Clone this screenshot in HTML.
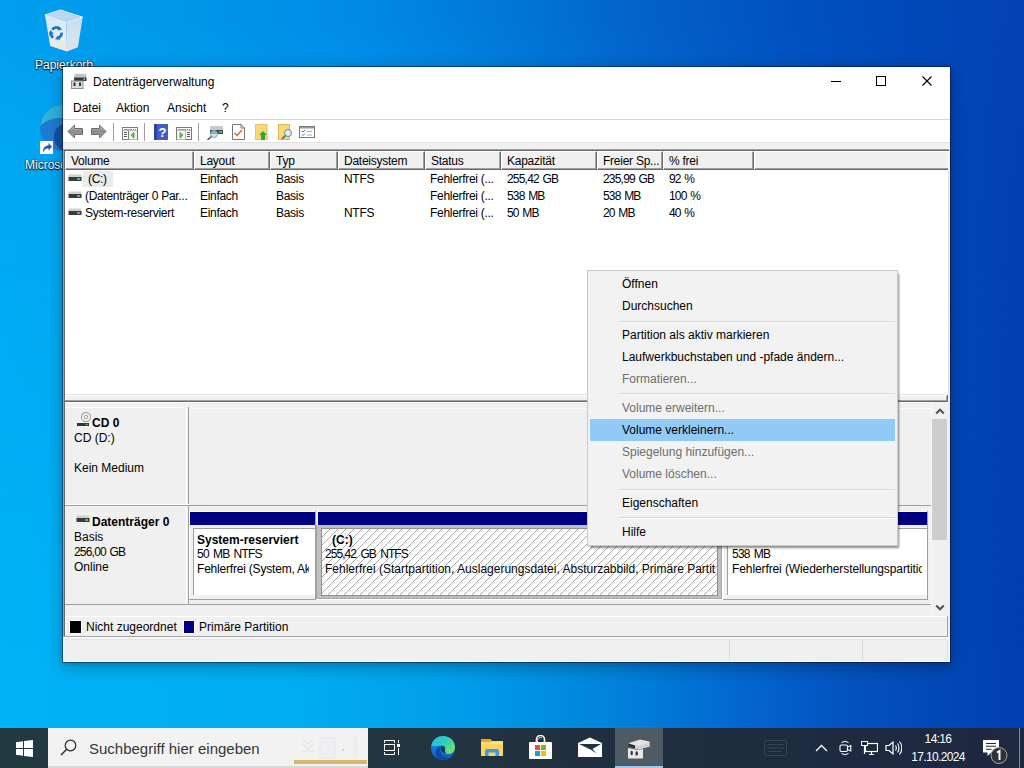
<!DOCTYPE html>
<html><head><meta charset="utf-8">
<style>
*{margin:0;padding:0;box-sizing:border-box}
html,body{width:1024px;height:768px;overflow:hidden}
body{position:relative;font-family:"Liberation Sans",sans-serif;font-size:12px;color:#000;
background:linear-gradient(90deg,#00b2f6 0%,#00b0f4 15%,#00adf0 29.3%,#009eea 44.3%,#0085dc 58.6%,#0365cf 73%,#0352bf 83%,#003fb0 100%)}
.a{position:absolute}
.t{position:absolute;white-space:nowrap;line-height:14px}
.dis{color:#6d6d6d}
.bd{font-weight:bold}
.dk{position:absolute;color:#fff;white-space:nowrap;font-size:12px;line-height:14px;text-shadow:0 0 2px #000,0 1px 1px #000}
</style></head><body>
<div class="a" style="left:0;top:0;width:1024px;height:768px;background:linear-gradient(90deg,#009fef 0%,#0096e8 19.5%,#008ae8 35%,#0078d8 48.8%,#0360c8 64%,#0050c0 78%,#0242b4 100%);-webkit-mask-image:linear-gradient(180deg,#000 0px,#000 20px,rgba(0,0,0,.45) 200px,rgba(0,0,0,0) 650px)"></div>

<svg class="a" style="left:40px;top:4px" width="48" height="52" viewBox="0 0 48 52">
<defs><linearGradient id="rbl" x1="0" y1="0" x2="0" y2="1"><stop offset="0" stop-color="#d8e6f2"/><stop offset=".65" stop-color="#e4edf4"/><stop offset="1" stop-color="#efe6e0"/></linearGradient>
<linearGradient id="rbr" x1="0" y1="0" x2="0" y2="1"><stop offset="0" stop-color="#cadcec"/><stop offset=".7" stop-color="#d6e4f0"/><stop offset="1" stop-color="#e6dcda"/></linearGradient></defs>
<path d="M5 11 L26.4 18.3 L27 47.4 L10.2 42 Z" fill="url(#rbl)"/>
<path d="M26.4 18.3 L42.7 13.2 L37.9 43.3 L27 47.4 Z" fill="url(#rbr)"/>
<path d="M5 11 L20.3 6 L42.7 13.2 L26.4 18.3 Z" fill="#a9cde9" stroke="#e6f2fb" stroke-width="1"/>
<path d="M8 11.3 L20.3 7.5 L39 13.3 L26.4 16.8 Z" fill="#bcd8ee"/>
<g fill="none" stroke="#1a74d2" stroke-width="2.8"><path d="M12.2 25.6 A5.4 5.4 0 0 1 19.6 24.6"/><path d="M21.6 28.6 A5.4 5.4 0 0 1 17.6 34"/><path d="M13.2 33.6 A5.4 5.4 0 0 1 10.9 28.4"/></g><g fill="#1a74d2"><path d="M18.2 22 L22.2 25.6 L17.6 26.6Z"/><path d="M20.2 35.8 L15 35.2 L17.8 31.4Z"/><path d="M9 31 L10.2 26 L13.6 29.4Z"/></g>
</svg>
<div class="dk" style="left:35px;top:58px">Papierkorb</div>
<svg class="a" style="left:38px;top:104px" width="26" height="50" viewBox="0 0 26 50">
<circle cx="25" cy="24" r="23" fill="#1f7bd2"/>
<path d="M2.2 22 A23 23 0 0 1 25 1 L25 14 C16 13.5 8 16 2.2 22Z" fill="#2fb2dc"/>
<path d="M25 20 C19 22 15 28 16 35 C17 41 21 45 25 47 Z" fill="#1450a8"/>
</svg>
<svg class="a" style="left:40px;top:141px" width="13" height="13" viewBox="0 0 13 13"><rect width="13" height="13" fill="#fff"/><path d="M3 11.5 C3 6.5 5 4.5 8.5 4.5 L8.5 2 L12 5.8 L8.5 9.5 L8.5 7.3 C6 7.3 4.5 8.5 3 11.5Z" fill="#2c56a6"/></svg>
<div class="dk" style="left:25px;top:158px">Microsoft Edge</div>
<div class="a" style="left:62px;top:66px;width:889px;height:597px;background:#f0f0f0;border:1px solid rgba(0,10,40,.5);background-clip:padding-box;box-shadow:0 4px 14px rgba(0,0,0,.3)"></div>
<div class="a" style="left:63px;top:67px;width:887px;height:52px;background:#fff"></div>
<svg class="a" style="left:71px;top:73px" width="16" height="16" viewBox="0 0 16 16">
<path d="M3.5 1.5 Q3.5 0.8 4.5 0.8 H14.5 Q15.5 0.8 15.5 1.5 V5 H3.5Z" fill="#c4c4c4"/>
<rect x="3" y="4.5" width="12.5" height="3.5" fill="#3a3a3a"/><rect x="12.5" y="5.5" width="1.5" height="1.2" fill="#cfe8cf"/>
<rect x="0.5" y="8" width="11.5" height="7.5" fill="#dcdcdc" stroke="#8e8e8e" stroke-width="1"/>
<rect x="2.5" y="9.5" width="2" height="3.5" fill="#303030"/><rect x="8" y="9.5" width="2" height="3.5" fill="#303030"/>
</svg>
<div class="t" style="left:93px;top:75px;">Datenträgerverwaltung</div>
<div class="t" style="left:73px;top:101px;">Datei</div>
<div class="t" style="left:116px;top:101px;">Aktion</div>
<div class="t" style="left:167px;top:101px;">Ansicht</div>
<div class="t" style="left:222px;top:101px;">?</div>
<div class="a" style="left:831px;top:81px;width:10px;height:1px;background:#000"></div>
<div class="a" style="left:876px;top:76px;width:10px;height:10px;border:1px solid #000"></div>
<svg class="a" style="left:921px;top:75px" width="12" height="12"><path d="M1.5 1.5 L10.5 10.5 M10.5 1.5 L1.5 10.5" stroke="#000" stroke-width="1.1"/></svg>
<div class="a" style="left:63px;top:119px;width:887px;height:1px;background:#d6d6d6"></div>
<div class="a" style="left:63px;top:120px;width:887px;height:22px;background:#fff"></div>
<div class="a" style="left:63px;top:142px;width:887px;height:1px;background:#e2e2e2"></div>
<svg class="a" style="left:67px;top:124px" width="18" height="16" viewBox="0 0 18 16"><defs><linearGradient id="ag" x1="0" y1="0" x2="0" y2="1"><stop offset="0" stop-color="#c4c4c4"/><stop offset=".5" stop-color="#8a8a8a"/><stop offset="1" stop-color="#a8a8a8"/></linearGradient></defs><path d="M1 7.5 L7.5 1 L7.5 4.5 L15.5 4.5 L15.5 10.5 L7.5 10.5 L7.5 14 Z" fill="url(#ag)" stroke="#6e6e6e" stroke-width="1" stroke-linejoin="round"/></svg>
<svg class="a" style="left:90px;top:124px" width="18" height="16" viewBox="0 0 18 16"><g transform="translate(17,0) scale(-1,1)"><path d="M1 7.5 L7.5 1 L7.5 4.5 L15.5 4.5 L15.5 10.5 L7.5 10.5 L7.5 14 Z" fill="url(#ag)" stroke="#6e6e6e" stroke-width="1" stroke-linejoin="round"/></g></svg>
<div class="a" style="left:113px;top:123px;width:1px;height:18px;background:#a0a0a0"></div>
<svg class="a" style="left:122px;top:127px" width="16" height="13" viewBox="0 0 16 13"><rect x="0.5" y="0.5" width="15" height="12" fill="#fff" stroke="#7a7a7a"/><rect x="2" y="2" width="8" height="1" fill="#9a9a9a"/><rect x="11" y="2" width="1" height="1" fill="#777"/><rect x="13" y="2" width="1" height="1" fill="#777"/><rect x="1" y="3" width="14" height="1" fill="#c0c0c0"/><rect x="6" y="4" width="1" height="8" fill="#7a7a7a"/><rect x="2" y="5" width="3" height="1" fill="#555"/><rect x="2" y="7" width="3" height="1" fill="#555"/><rect x="2" y="9" width="3" height="1" fill="#555"/><rect x="7" y="4" width="8" height="8.5" fill="#eef7ea"/><path d="M12 5.5 L9 8.2 L12 11Z" fill="#7cc26c" stroke="#3c9a3c" stroke-width=".8"/></svg>
<div class="a" style="left:144px;top:123px;width:1px;height:18px;background:#a0a0a0"></div>
<svg class="a" style="left:154px;top:124px" width="14" height="16" viewBox="0 0 14 16"><rect x="0" y="0" width="14" height="16" fill="#3f5fc6"/><rect x="0" y="0" width="3" height="16" fill="#2a43a0"/><text x="8.5" y="13" font-family="Liberation Sans" font-weight="bold" font-size="13" fill="#fff" text-anchor="middle">?</text></svg>
<svg class="a" style="left:176px;top:127px" width="16" height="13" viewBox="0 0 16 13"><rect x="0.5" y="0.5" width="15" height="12" fill="#fff" stroke="#7a7a7a"/><rect x="2" y="2" width="8" height="1" fill="#9a9a9a"/><rect x="11" y="2" width="1" height="1" fill="#777"/><rect x="13" y="2" width="1" height="1" fill="#777"/><rect x="1" y="3" width="14" height="1" fill="#c0c0c0"/><rect x="9" y="4" width="1" height="8" fill="#7a7a7a"/><rect x="11" y="5" width="3" height="1" fill="#555"/><rect x="11" y="7" width="3" height="1" fill="#555"/><rect x="11" y="9" width="3" height="1" fill="#555"/><rect x="1" y="4" width="8.5" height="8.5" fill="#eef7ea"/><path d="M4 5.5 L7 8.2 L4 11Z" fill="#7cc26c" stroke="#3c9a3c" stroke-width=".8"/></svg>
<div class="a" style="left:198px;top:123px;width:1px;height:18px;background:#a0a0a0"></div>
<svg class="a" style="left:207px;top:126px" width="16" height="14" viewBox="0 0 16 14"><rect x="3" y="0" width="13" height="4" rx="1" fill="#c8c8c8"/><rect x="3" y="4" width="13" height="4" fill="#3a4a4a"/><rect x="12" y="5" width="3" height="2" fill="#3fd03f"/><circle cx="7" cy="8" r="3.5" fill="#b8d8e8" fill-opacity=".7" stroke="#8aa" stroke-width="1"/><path d="M4.5 10.5 L0.5 14" stroke="#555" stroke-width="1.5"/></svg>
<svg class="a" style="left:232px;top:124px" width="13" height="16" viewBox="0 0 13 16"><path d="M0.5 0.5 L9 0.5 L12.5 4 L12.5 15.5 L0.5 15.5Z" fill="#fff" stroke="#777"/><path d="M9 0.5 L9 4 L12.5 4" fill="none" stroke="#777"/><path d="M2.5 9 L5 11.5 L10 6" fill="none" stroke="#e06030" stroke-width="1.5"/></svg>
<svg class="a" style="left:255px;top:124px" width="14" height="16" viewBox="0 0 14 16"><rect x="0" y="0" width="12" height="16" fill="#f8d878"/><rect x="0" y="0" width="12" height="16" fill="none" stroke="#e0b850"/><path d="M8 7 L12 11 L10 11 L10 16 L6 16 L6 11 L4 11Z" fill="#2ea82e"/></svg>
<svg class="a" style="left:278px;top:124px" width="15" height="16" viewBox="0 0 15 16"><rect x="0" y="0" width="12" height="16" fill="#f8d878"/><rect x="0.5" y="0.5" width="11" height="15" fill="none" stroke="#e0b850"/><circle cx="10" cy="9" r="3.5" fill="#d8eef8" stroke="#6a8aa0"/><path d="M7.5 11.5 L4 15" stroke="#555" stroke-width="1.5"/></svg>
<svg class="a" style="left:299px;top:126px" width="16" height="12" viewBox="0 0 16 12"><rect x="0.5" y="0.5" width="15" height="11" fill="#fff" stroke="#777"/><rect x="1" y="1" width="14" height="1.5" fill="#999"/><path d="M3 5 L4 6 L6 4 M3 8.5 L4 9.5 L6 7.5" fill="none" stroke="#3a7ad0" stroke-width="1"/><rect x="8" y="5" width="5" height="1" fill="#aaa"/><rect x="8" y="8.5" width="5" height="1" fill="#aaa"/></svg>
<div class="a" style="left:63px;top:149px;width:886px;height:246px;background:#fff;border-top:1px solid #a0a0a0;border-left:1px solid #a0a0a0"></div>
<div class="a" style="left:64px;top:150px;width:885px;height:244px;border-top:1px solid #696969;border-left:1px solid #696969"></div>
<div class="a" style="left:65px;top:394px;width:884px;height:1px;background:#e3e3e3"></div>
<div class="a" style="left:948px;top:170px;width:1px;height:225px;background:#e3e3e3"></div>
<div class="a" style="left:65px;top:151px;width:129px;height:19px;background:#f0f0f0;border-top:1px solid #fff;border-left:1px solid #fff;border-right:1px solid #696969;border-bottom:1px solid #696969;box-shadow:inset -1px -1px 0 #a0a0a0"></div>
<div class="t" style="left:71px;top:154px;letter-spacing:-0.25px">Volume</div>
<div class="a" style="left:194px;top:151px;width:76px;height:19px;background:#f0f0f0;border-top:1px solid #fff;border-left:1px solid #fff;border-right:1px solid #696969;border-bottom:1px solid #696969;box-shadow:inset -1px -1px 0 #a0a0a0"></div>
<div class="t" style="left:200px;top:154px;letter-spacing:-0.25px">Layout</div>
<div class="a" style="left:270px;top:151px;width:68px;height:19px;background:#f0f0f0;border-top:1px solid #fff;border-left:1px solid #fff;border-right:1px solid #696969;border-bottom:1px solid #696969;box-shadow:inset -1px -1px 0 #a0a0a0"></div>
<div class="t" style="left:276px;top:154px;letter-spacing:-0.25px">Typ</div>
<div class="a" style="left:338px;top:151px;width:87px;height:19px;background:#f0f0f0;border-top:1px solid #fff;border-left:1px solid #fff;border-right:1px solid #696969;border-bottom:1px solid #696969;box-shadow:inset -1px -1px 0 #a0a0a0"></div>
<div class="t" style="left:344px;top:154px;letter-spacing:-0.25px">Dateisystem</div>
<div class="a" style="left:425px;top:151px;width:76px;height:19px;background:#f0f0f0;border-top:1px solid #fff;border-left:1px solid #fff;border-right:1px solid #696969;border-bottom:1px solid #696969;box-shadow:inset -1px -1px 0 #a0a0a0"></div>
<div class="t" style="left:431px;top:154px;letter-spacing:-0.25px">Status</div>
<div class="a" style="left:501px;top:151px;width:96px;height:19px;background:#f0f0f0;border-top:1px solid #fff;border-left:1px solid #fff;border-right:1px solid #696969;border-bottom:1px solid #696969;box-shadow:inset -1px -1px 0 #a0a0a0"></div>
<div class="t" style="left:507px;top:154px;letter-spacing:-0.25px">Kapazität</div>
<div class="a" style="left:597px;top:151px;width:66px;height:19px;background:#f0f0f0;border-top:1px solid #fff;border-left:1px solid #fff;border-right:1px solid #696969;border-bottom:1px solid #696969;box-shadow:inset -1px -1px 0 #a0a0a0"></div>
<div class="t" style="left:603px;top:154px;letter-spacing:-0.25px">Freier Sp...</div>
<div class="a" style="left:663px;top:151px;width:91px;height:19px;background:#f0f0f0;border-top:1px solid #fff;border-left:1px solid #fff;border-right:1px solid #696969;border-bottom:1px solid #696969;box-shadow:inset -1px -1px 0 #a0a0a0"></div>
<div class="t" style="left:669px;top:154px;letter-spacing:-0.25px">% frei</div>
<div class="a" style="left:754px;top:151px;width:194px;height:19px;background:#f0f0f0;border-top:1px solid #fff;border-left:1px solid #fff;border-bottom:1px solid #696969;box-shadow:inset 0 -1px 0 #a0a0a0"></div>
<div class="a" style="left:83px;top:171px;width:30px;height:16px;background:#ebebeb"></div>
<svg class="a" style="left:68px;top:174px" width="14" height="8" viewBox="0 0 14 8"><rect x="0.5" y="0.5" width="13" height="3" fill="#d0d0d0"/><rect x="0.5" y="3" width="13" height="4" fill="#3a3a3a"/><rect x="9" y="4" width="3" height="2" fill="#49c549"/></svg>
<div class="t" style="left:88px;top:172px;letter-spacing:-0.3px">(C:)</div>
<div class="t" style="left:200px;top:172px;letter-spacing:-0.3px">Einfach</div>
<div class="t" style="left:276px;top:172px;letter-spacing:-0.3px">Basis</div>
<div class="t" style="left:344px;top:172px;letter-spacing:-0.3px">NTFS</div>
<div class="t" style="left:430px;top:172px;letter-spacing:-0.3px">Fehlerfrei (...</div>
<div class="t" style="left:507px;top:172px;letter-spacing:-0.8px;word-spacing:1px">255,42 GB</div>
<div class="t" style="left:603px;top:172px;letter-spacing:-0.8px;word-spacing:1px">235,99 GB</div>
<div class="t" style="left:669px;top:172px;letter-spacing:-0.8px;word-spacing:1px">92 %</div>
<svg class="a" style="left:68px;top:191px" width="14" height="8" viewBox="0 0 14 8"><rect x="0.5" y="0.5" width="13" height="3" fill="#d0d0d0"/><rect x="0.5" y="3" width="13" height="4" fill="#3a3a3a"/><rect x="9" y="4" width="3" height="2" fill="#49c549"/></svg>
<div class="t" style="left:85px;top:189px;letter-spacing:-0.3px">(Datenträger 0 Par...</div>
<div class="t" style="left:200px;top:189px;letter-spacing:-0.3px">Einfach</div>
<div class="t" style="left:276px;top:189px;letter-spacing:-0.3px">Basis</div>
<div class="t" style="left:344px;top:189px;letter-spacing:-0.3px"></div>
<div class="t" style="left:430px;top:189px;letter-spacing:-0.3px">Fehlerfrei (...</div>
<div class="t" style="left:507px;top:189px;letter-spacing:-0.8px;word-spacing:1px">538 MB</div>
<div class="t" style="left:603px;top:189px;letter-spacing:-0.8px;word-spacing:1px">538 MB</div>
<div class="t" style="left:669px;top:189px;letter-spacing:-0.8px;word-spacing:1px">100 %</div>
<svg class="a" style="left:68px;top:208px" width="14" height="8" viewBox="0 0 14 8"><rect x="0.5" y="0.5" width="13" height="3" fill="#d0d0d0"/><rect x="0.5" y="3" width="13" height="4" fill="#3a3a3a"/><rect x="9" y="4" width="3" height="2" fill="#49c549"/></svg>
<div class="t" style="left:85px;top:206px;letter-spacing:-0.3px">System-reserviert</div>
<div class="t" style="left:200px;top:206px;letter-spacing:-0.3px">Einfach</div>
<div class="t" style="left:276px;top:206px;letter-spacing:-0.3px">Basis</div>
<div class="t" style="left:344px;top:206px;letter-spacing:-0.3px">NTFS</div>
<div class="t" style="left:430px;top:206px;letter-spacing:-0.3px">Fehlerfrei (...</div>
<div class="t" style="left:507px;top:206px;letter-spacing:-0.8px;word-spacing:1px">50 MB</div>
<div class="t" style="left:603px;top:206px;letter-spacing:-0.8px;word-spacing:1px">20 MB</div>
<div class="t" style="left:669px;top:206px;letter-spacing:-0.8px;word-spacing:1px">40 %</div>
<div class="a" style="left:65px;top:395px;width:883px;height:5px;background:#f0f0f0"></div>
<div class="a" style="left:65px;top:395px;width:883px;height:1px;background:#fff"></div>
<div class="a" style="left:65px;top:390px;width:1px;height:10px;background:#fff"></div>
<div class="a" style="left:64px;top:400px;width:883px;height:1px;background:#a0a0a0"></div>
<div class="a" style="left:64px;top:401px;width:884px;height:1px;background:#696969"></div>
<div class="a" style="left:65px;top:402px;width:866px;height:1px;background:#fbfbfb"></div>
<div class="a" style="left:946px;top:396px;width:1px;height:5px;background:#a0a0a0"></div>
<div class="a" style="left:947px;top:395px;width:1px;height:7px;background:#696969"></div>
<div class="a" style="left:63px;top:400px;width:1px;height:205px;background:#a0a0a0"></div>
<div class="a" style="left:64px;top:401px;width:1px;height:204px;background:#696969"></div>
<div class="a" style="left:931px;top:402px;width:17px;height:214px;background:#f0f0f0;border-left:1px solid #f8f8f8"></div>
<div class="a" style="left:932px;top:419px;width:15px;height:121px;background:#cdcdcd"></div>
<svg class="a" style="left:935px;top:407px" width="10" height="8" viewBox="0 0 10 8"><path d="M1.2 6.5 L5 2.7 L8.8 6.5" fill="none" stroke="#505050" stroke-width="2"/></svg>
<svg class="a" style="left:935px;top:604px" width="10" height="8" viewBox="0 0 10 8"><path d="M1.2 1.5 L5 5.3 L8.8 1.5" fill="none" stroke="#505050" stroke-width="2"/></svg>
<div class="a" style="left:65px;top:407px;width:118px;height:1px;background:#fff"></div>
<div class="a" style="left:190px;top:408px;width:741px;height:1px;background:#fafafa"></div>
<div class="a" style="left:186px;top:408px;width:1px;height:97px;background:#fff"></div>
<div class="a" style="left:188px;top:407px;width:1px;height:98px;background:#a0a0a0"></div>
<div class="a" style="left:65px;top:504px;width:124px;height:1px;background:#fff"></div>
<div class="a" style="left:65px;top:505px;width:866px;height:1px;background:#a0a0a0"></div>
<svg class="a" style="left:76px;top:410px" width="15" height="17" viewBox="0 0 15 17"><circle cx="10" cy="7" r="4.6" fill="#ececec" stroke="#a8a8a8" stroke-width="1.1"/><circle cx="10" cy="7" r="1.6" fill="#fff" stroke="#a0a0a0" stroke-width="1"/><rect x="1" y="13" width="12" height="3" fill="#333"/><rect x="9.5" y="13.8" width="2.2" height="1.4" fill="#3ecf3e"/></svg>
<div class="t" style="left:92px;top:416px;"><span class="bd">CD 0</span></div>
<div class="t" style="left:74px;top:431px;">CD (D:)</div>
<div class="t" style="left:74px;top:461px;">Kein Medium</div>
<div class="a" style="left:186px;top:506px;width:1px;height:98px;background:#fff"></div>
<div class="a" style="left:188px;top:506px;width:1px;height:98px;background:#a0a0a0"></div>
<div class="a" style="left:65px;top:604px;width:866px;height:1px;background:#a0a0a0"></div>
<svg class="a" style="left:76px;top:515px" width="14" height="8" viewBox="0 0 14 8"><rect x="0.5" y="0.5" width="13" height="3" fill="#d0d0d0"/><rect x="0.5" y="3" width="13" height="4" fill="#3a3a3a"/><rect x="9" y="4" width="3" height="2" fill="#49c549"/></svg>
<div class="t" style="left:92px;top:515px;"><span class="bd">Datenträger 0</span></div>
<div class="t" style="left:74px;top:530px;">Basis</div>
<div class="t" style="left:74px;top:545px;letter-spacing:-0.8px;word-spacing:1px">256,00 GB</div>
<div class="t" style="left:74px;top:560px;">Online</div>
<div class="a" style="left:189px;top:511px;width:126px;height:88px;background:#fff"></div>
<div class="a" style="left:190px;top:512px;width:125px;height:13px;background:#000080"></div>
<div class="a" style="left:190px;top:525px;width:125px;height:74px;background:#f0f0f0"></div>
<div class="a" style="left:315px;top:511px;width:1px;height:89px;background:#a0a0a0"></div>
<div class="a" style="left:189px;top:599px;width:127px;height:1px;background:#a0a0a0"></div>
<div class="a" style="left:193px;top:528px;width:122px;height:67px;background:#fff;border-left:1px solid #a0a0a0;border-top:1px solid #a0a0a0"></div>
<div class="a" style="left:316px;top:511px;width:407px;height:1px;background:#fff"></div>
<div class="a" style="left:318px;top:512px;width:404px;height:13px;background:#000080"></div>
<div class="a" style="left:316px;top:525px;width:406px;height:74px;background:#c0c0c0"></div>
<div class="a" style="left:316px;top:525px;width:1px;height:74px;background:#a0a0a0"></div>
<div class="a" style="left:721px;top:525px;width:1px;height:74px;background:#a8a8a8"></div>
<div class="a" style="left:316px;top:598px;width:406px;height:1px;background:#a8a8a8"></div>
<div class="a" style="left:722px;top:511px;width:1px;height:89px;background:#fff"></div>
<div class="a" style="left:316px;top:599px;width:407px;height:1px;background:#fff"></div>
<div class="a" style="left:321px;top:528px;width:397px;height:68px;border:1px solid #909090"></div>
<svg class="a" style="left:322px;top:529px" width="395" height="66"><defs><pattern id="hp" patternUnits="userSpaceOnUse" width="8" height="8"><path d="M-1 9 L9 -1" stroke="#a8a8a8" stroke-width="1"/></pattern></defs><rect width="100%" height="100%" fill="#fff"/><rect width="100%" height="100%" fill="url(#hp)"/></svg>
<div class="a" style="left:723px;top:511px;width:204px;height:88px;background:#fff"></div>
<div class="a" style="left:724px;top:512px;width:203px;height:13px;background:#000080"></div>
<div class="a" style="left:724px;top:525px;width:203px;height:74px;background:#f0f0f0"></div>
<div class="a" style="left:927px;top:511px;width:1px;height:89px;background:#a0a0a0"></div>
<div class="a" style="left:723px;top:599px;width:205px;height:1px;background:#a0a0a0"></div>
<div class="a" style="left:727px;top:528px;width:200px;height:67px;background:#fff;border-left:1px solid #a0a0a0;border-top:1px solid #a0a0a0"></div>
<div class="t" style="left:197px;top:533px;"><span class="bd">System-reserviert</span></div>
<div class="t" style="left:197px;top:547px;letter-spacing:-0.75px;word-spacing:1.5px">50 MB NTFS</div>
<div class="t" style="left:197px;top:562px;width:112px;overflow:hidden;letter-spacing:-0.2px">Fehlerfrei (System, Aktiv, Primäre Partition)</div>
<div class="t" style="left:332px;top:533px;text-shadow:0 0 1px #fff,0 0 1px #fff"><span class="bd">(C:)</span></div>
<div class="t" style="left:325px;top:547px;letter-spacing:-0.95px;word-spacing:2px;text-shadow:0 0 1px #fff,0 0 1px #fff">255,42 GB NTFS</div>
<div class="t" style="left:325px;top:562px;width:391px;overflow:hidden;text-shadow:0 0 1px #fff,0 0 1px #fff">Fehlerfrei (Startpartition, Auslagerungsdatei, Absturzabbild, Primäre Partition)</div>
<div class="t" style="left:732px;top:547px;letter-spacing:-0.75px;word-spacing:1.5px">538 MB</div>
<div class="t" style="left:732px;top:562px;width:190px;overflow:hidden;letter-spacing:-0.1px">Fehlerfrei (Wiederherstellungspartition)</div>
<div class="a" style="left:65px;top:616px;width:882px;height:1px;background:#fff"></div>
<div class="a" style="left:65px;top:616px;width:1px;height:20px;background:#fff"></div>
<div class="a" style="left:947px;top:616px;width:1px;height:21px;background:#a0a0a0"></div>
<div class="a" style="left:64px;top:636px;width:884px;height:1px;background:#a0a0a0"></div>
<div class="a" style="left:63px;top:149px;width:1px;height:488px;background:#a0a0a0"></div>
<div class="a" style="left:64px;top:150px;width:1px;height:486px;background:#696969"></div>
<div class="a" style="left:69px;top:620px;width:13px;height:14px;background:#fff"></div>
<div class="a" style="left:70px;top:621px;width:11px;height:12px;background:#000"></div>
<div class="t" style="left:86px;top:620px;">Nicht zugeordnet</div>
<div class="a" style="left:183px;top:620px;width:12px;height:14px;background:#fff"></div>
<div class="a" style="left:184px;top:621px;width:10px;height:12px;background:#000080"></div>
<div class="t" style="left:199px;top:620px;">Primäre Partition</div>
<div class="a" style="left:63px;top:637px;width:887px;height:25px;background:#f0f0f0"></div>
<div class="a" style="left:63px;top:637px;width:887px;height:1px;background:#fff"></div>
<div class="a" style="left:63px;top:637px;width:1px;height:25px;background:#fff"></div>
<div class="a" style="left:63px;top:661px;width:887px;height:1px;background:#fff"></div>
<div class="a" style="left:949px;top:637px;width:1px;height:25px;background:#fff"></div>
<div class="a" style="left:65px;top:639px;width:882px;height:1px;background:#e6e6e6"></div>
<div class="a" style="left:729px;top:640px;width:1px;height:20px;background:#d9d9d9"></div>
<div class="a" style="left:862px;top:640px;width:1px;height:20px;background:#d9d9d9"></div>
<div class="a" style="left:947px;top:640px;width:1px;height:20px;background:#dde4dd"></div>
<div class="a" style="left:587px;top:270px;width:311px;height:276px;background:#f2f2f2;border:1px solid #cacaca;box-shadow:2px 3px 2px -1px rgba(0,0,0,.45)"></div>
<div class="a" style="left:590px;top:419px;width:305px;height:22px;background:#91c9f7"></div>
<div class="t" style="left:622px;top:277px;">Öffnen</div>
<div class="t" style="left:622px;top:299px;">Durchsuchen</div>
<div class="t" style="left:622px;top:328px;">Partition als aktiv markieren</div>
<div class="t" style="left:622px;top:350px;">Laufwerkbuchstaben und -pfade ändern...</div>
<div class="t dis" style="left:622px;top:372px;">Formatieren...</div>
<div class="t dis" style="left:622px;top:401px;">Volume erweitern...</div>
<div class="t" style="left:622px;top:423px;">Volume verkleinern...</div>
<div class="t dis" style="left:622px;top:445px;">Spiegelung hinzufügen...</div>
<div class="t dis" style="left:622px;top:467px;">Volume löschen...</div>
<div class="t" style="left:622px;top:496px;">Eigenschaften</div>
<div class="t" style="left:622px;top:525px;">Hilfe</div>
<div class="a" style="left:618px;top:321px;width:277px;height:1px;background:#d7d7d7"></div>
<div class="a" style="left:618px;top:322px;width:277px;height:1px;background:#fafafa"></div>
<div class="a" style="left:618px;top:393px;width:277px;height:1px;background:#d7d7d7"></div>
<div class="a" style="left:618px;top:394px;width:277px;height:1px;background:#fafafa"></div>
<div class="a" style="left:618px;top:489px;width:277px;height:1px;background:#d7d7d7"></div>
<div class="a" style="left:618px;top:490px;width:277px;height:1px;background:#fafafa"></div>
<div class="a" style="left:618px;top:517px;width:277px;height:1px;background:#d7d7d7"></div>
<div class="a" style="left:618px;top:518px;width:277px;height:1px;background:#fafafa"></div>
<div class="a" style="left:0;top:728px;width:1024px;height:40px;background:linear-gradient(90deg,#223a42 0%,#223641 40%,#20303f 55%,#1d2a40 85%,#1e2840 100%)"></div>
<svg class="a" style="left:16px;top:740px" width="17" height="17" viewBox="0 0 17 17"><path d="M0 2.3 L7 1.3 L7 8 L0 8Z M8 1.1 L17 0 L17 8 L8 8Z M0 9 L7 9 L7 15.7 L0 14.7Z M8 9 L17 9 L17 17 L8 15.9Z" fill="#fff"/></svg>
<div class="a" style="left:48px;top:728px;width:320px;height:40px;background:#f2f2f2"></div>
<div class="a" style="left:48px;top:766px;width:320px;height:2px;background:#d8d8d8"></div>
<svg class="a" style="left:60px;top:739px" width="17" height="17" viewBox="0 0 17 17"><circle cx="10.5" cy="6.5" r="5.3" fill="none" stroke="#2a2a2a" stroke-width="1.2"/><path d="M6.7 10.3 L1 16" stroke="#2a2a2a" stroke-width="1.4"/></svg>
<div class="a" style="left:89px;top:740px;font-size:15px;line-height:18px;color:#363636;white-space:nowrap">Suchbegriff hier eingeben</div>
<div class="a" style="left:294px;top:760px;width:73px;height:4px;background:#dcb56c"></div>
<svg class="a" style="left:296px;top:735px" width="70" height="25" viewBox="0 0 70 25"><path d="M7 4 L12 9 L17 4 M6 8 L12 14 L18 8 M5 16 H19" fill="none" stroke="#e6e6e6" stroke-width="1.3"/><rect x="24" y="3" width="15" height="20" rx="2" fill="#eef0f3" stroke="#e6e6e6"/><circle cx="47" cy="15" r=".8" fill="#aaa"/><rect x="57" y="2" width="5" height="21" fill="#ededed"/></svg>
<svg class="a" style="left:383px;top:739px" width="18" height="17" viewBox="0 0 18 17"><path d="M1.5 4 V1.5 H11.5 V4 M1.5 13 V15.5 H11.5 V13" fill="none" stroke="#fff" stroke-width="1"/><rect x="1.5" y="5.5" width="10" height="6" fill="none" stroke="#fff" stroke-width="1"/><rect x="15" y="1" width="1" height="3" fill="#fff"/><rect x="14" y="5" width="3" height="3" fill="#fff"/><rect x="15" y="9" width="1" height="7" fill="#fff"/></svg>
<svg class="a" style="left:430px;top:735px" width="26" height="26" viewBox="0 0 26 26"><defs><linearGradient id="eg" x1="0" y1="0" x2="1" y2=".6"><stop offset="0" stop-color="#2fb8e8"/><stop offset=".55" stop-color="#2ccfc0"/><stop offset="1" stop-color="#6de06a"/></linearGradient><linearGradient id="eb" x1="0" y1="0" x2="0" y2="1"><stop offset="0" stop-color="#1a8ae6"/><stop offset="1" stop-color="#0f5fc0"/></linearGradient></defs><circle cx="13" cy="13" r="12" fill="url(#eb)"/><path d="M1.3 10.5 C3 4 8 1 13 1 C20 1 25 6 25 12 C25 16.5 22 19 18.5 19 C15.5 19 14.3 17 15 15 C15.8 12.5 14.5 10.5 12 10.5 C8 10.5 5 12 1.3 10.5Z" fill="url(#eg)"/><path d="M12 11 C10 12 9.5 15 11 18 C12.5 21 16 23.5 20 23 C17 25 12 25.5 8.5 23.5 C5 21 4.5 15 8 12.5 C9 11.8 10.5 11.2 12 11Z" fill="#0c4aa6"/><path d="M11.5 11 C13.5 11 15.3 12 15 14.5 C14.7 16 15 17.5 16 18.5 C13 18 11 16 10.8 13.5Z" fill="#1d3550"/></svg>
<svg class="a" style="left:480px;top:738px" width="24" height="19" viewBox="0 0 24 19"><path d="M1 1 H10 L12 3 H23 V18 H1Z" fill="#ffd45e"/><rect x="1" y="1" width="10" height="3" fill="#e8a915"/><rect x="1" y="4" width="22" height="2" fill="#ffe17a"/><path d="M5 18 V13 Q5 11 7 11 H17 Q19 11 19 13 V18 H15.5 V14.5 H8.5 V18Z" fill="#3b9be0"/></svg>
<svg class="a" style="left:528px;top:735px" width="25" height="25" viewBox="0 0 25 25"><path d="M8.5 7 V4.5 A4 4 0 0 1 16.5 4.5 V7" fill="none" stroke="#fff" stroke-width="1.6"/><path d="M9.5 7 V5.5 A3 3 0 0 1 14 3" fill="none" stroke="#fff" stroke-width="0.8"/><rect x="1" y="7" width="23" height="17" rx="1" fill="#fff"/><rect x="7" y="10" width="5" height="5" fill="#f25022"/><rect x="13" y="10" width="5" height="5" fill="#7fba00"/><rect x="7" y="16" width="5" height="5" fill="#00a4ef"/><rect x="13" y="16" width="5" height="5" fill="#ffb900"/></svg>
<svg class="a" style="left:577px;top:737px" width="26" height="21" viewBox="0 0 26 21"><path d="M1 6 L13 0.5 L25 6 V20 H1Z" fill="#fff"/><path d="M2 7 H24 L15.5 12 L19.5 16.5 L13.5 12.5Z" fill="#1d3446"/></svg>
<div class="a" style="left:615px;top:728px;width:48px;height:40px;background:#4e5a64"></div>
<div class="a" style="left:615px;top:766px;width:48px;height:2px;background:#9fc4e6"></div>
<svg class="a" style="left:626px;top:738px" width="26" height="22" viewBox="0 0 26 22"><path d="M3 5 L14 1.5 L23.5 3.5 L23.5 8.5 L12.5 11.5 L3 8.5Z" fill="#e4e4e4"/><path d="M3 5 L12.5 8 L23.5 4.5 L23.5 8.5 L12.5 11.5 L3 8.5Z" fill="#cfcfcf"/><path d="M2.5 5.5 L9 7.5 L9 10.5 L2.5 8.5Z" fill="#2a2a2a"/><path d="M2 10 L12 12 L17 11 L17 20.5 L2 20.5Z" fill="#e6e6e6"/><ellipse cx="5.7" cy="15" rx="1.2" ry="2.3" fill="#333"/><ellipse cx="10.7" cy="15.5" rx="1.2" ry="2.3" fill="#333"/></svg>
<svg class="a" style="left:764px;top:740px" width="25" height="16" viewBox="0 0 25 16"><rect x="0.5" y="0.5" width="22" height="15" rx="1" fill="none" stroke="#354555"/><path d="M3 4.5 H20 M3 8 H20 M5 11.5 H18" stroke="#354555" stroke-width="1"/></svg>
<svg class="a" style="left:815px;top:744px" width="13" height="8" viewBox="0 0 13 8"><path d="M1 7 L6.5 1.5 L12 7" fill="none" stroke="#fff" stroke-width="1.3"/></svg>
<svg class="a" style="left:839px;top:740px" width="13" height="16" viewBox="0 0 13 16"><path d="M2.5 2.5 Q6 0 9.5 2.5 M2.5 13.5 Q6 16 9.5 13.5" fill="none" stroke="#fff" stroke-width="1"/><rect x="1" y="5" width="7.5" height="6.5" rx="1.5" fill="none" stroke="#fff" stroke-width="1.1"/><path d="M8.5 7 L11.8 5.5 V11 L8.5 9.5" fill="none" stroke="#fff" stroke-width="1.1"/></svg>
<svg class="a" style="left:861px;top:741px" width="17" height="14" viewBox="0 0 17 14"><rect x="4.5" y="2.5" width="12" height="8" fill="none" stroke="#fff" stroke-width="1.2"/><rect x="0.5" y="0.5" width="6" height="4" fill="#1d2a3a" stroke="#fff" stroke-width="1"/><path d="M3.5 4.5 V13 M8 13.5 H13 M10.5 10.5 V13.5" stroke="#fff" stroke-width="1.2"/></svg>
<svg class="a" style="left:885px;top:740px" width="17" height="16" viewBox="0 0 17 16"><path d="M1 5.5 H4 L8 2 V14 L4 10.5 H1Z" fill="none" stroke="#fff" stroke-width="1.2"/><path d="M10.5 5.5 C11.5 7 11.5 9 10.5 10.5 M12.5 3.5 C14.5 6 14.5 10 12.5 12.5 M14.5 1.5 C17.5 5 17.5 11 14.5 14.5" fill="none" stroke="#fff" stroke-width="1.1"/></svg>
<div class="a" style="left:904px;top:732px;width:68px;text-align:center;color:#fff;font-size:12px;line-height:14px;white-space:nowrap;letter-spacing:-0.65px">14:16</div>
<div class="a" style="left:904px;top:750px;width:68px;text-align:center;color:#fff;font-size:12px;line-height:14px;white-space:nowrap;letter-spacing:-0.65px">17.10.2024</div>
<svg class="a" style="left:982px;top:739px" width="28" height="26" viewBox="0 0 28 26"><path d="M1 1 H17 V13.5 H9 L5.5 17 V13.5 H1Z" fill="#fff"/><path d="M4 4.5 H14 M4 7.3 H14 M4 10.2 H9.5" stroke="#1d2a40" stroke-width="1.1"/><circle cx="17" cy="16.5" r="8" fill="#2e3338" stroke="#a8a8a8" stroke-width="1"/><path d="M15 13.5 L17.5 12 V21" fill="none" stroke="#fff" stroke-width="2"/></svg>
<div class="a" style="left:1019px;top:728px;width:1px;height:40px;background:#7a8aa2"></div>
</body></html>
